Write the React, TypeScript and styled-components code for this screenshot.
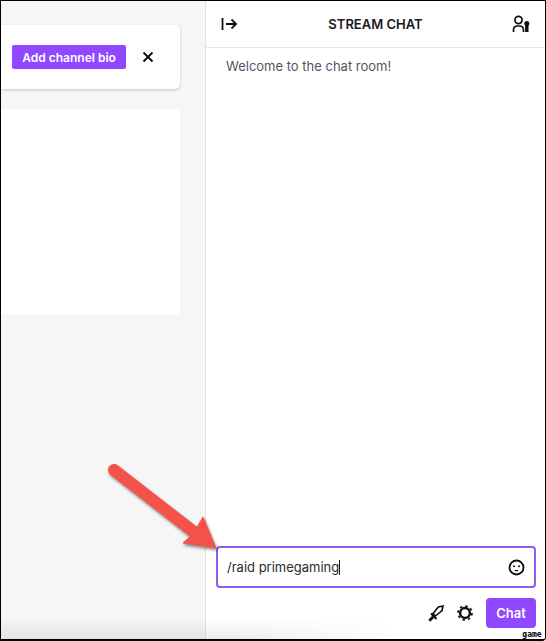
import React from "react";
import styled, { createGlobalStyle } from "styled-components";

const Global = createGlobalStyle`
  html, body {
    margin: 0;
    padding: 0;
    background: #fff;
  }
  body {
    font-family: Inter, "Liberation Sans", sans-serif;
  }
`;

const Frame = styled.div`
  position: relative;
  width: 546px;
  height: 641px;
  box-sizing: border-box;
  border: solid #000;
  border-width: 1px 1px 2px 1px;
  border-bottom-right-radius: 4px;
  display: flex;
  overflow: hidden;
  background: #fff;
`;

const Dashboard = styled.div`
  width: 205px;
  flex-shrink: 0;
  box-sizing: border-box;
  padding: 24px 25px 0 0;
  background: #f6f6f6;
  border-right: 1px solid #e2e2e4;
  display: flex;
  flex-direction: column;
  gap: 20px;
`;

const BioCard = styled.div`
  height: 64px;
  background: #fff;
  border-radius: 0 5px 5px 0;
  box-shadow: 0 1px 3px rgba(0, 0, 0, 0.2);
  display: flex;
  align-items: center;
  justify-content: flex-end;
  gap: 15px;
  padding-right: 25px;
`;

const BioButton = styled.button`
  width: 114px;
  height: 24px;
  border: 0;
  padding: 0;
  border-radius: 2px;
  background: #9147ff;
  color: #fff;
  font: 600 12px Inter, "Liberation Sans", sans-serif;
`;

const IconButton = styled.span`
  display: flex;
  color: #0e0e10;
`;

const Panel = styled.div`
  height: 205px;
  background: #fff;
`;

const Chat = styled.div`
  flex: 1;
  display: flex;
  flex-direction: column;
  background: #fff;
`;

const ChatHeader = styled.div`
  height: 47px;
  flex-shrink: 0;
  box-sizing: border-box;
  border-bottom: 1px solid #e6e6e8;
  display: flex;
  align-items: center;
  justify-content: space-between;
  padding: 0 15px 0 15px;
`;

const ChatTitle = styled.div`
  font-size: 13px;
  font-weight: 600;
  color: #18181b;
  margin-left: 1px;
`;

const Messages = styled.div`
  flex: 1;
  padding: 9px 20px;
  font-size: 13px;
  line-height: 18px;
  color: #53535f;
`;

const Composer = styled.div`
  padding: 0 9px 11px 10px;
  display: flex;
  flex-direction: column;
  gap: 10px;
`;

const InputBox = styled.div`
  height: 42px;
  box-sizing: border-box;
  border: 2px solid #8f5cf0;
  border-radius: 4px;
  display: flex;
  align-items: center;
  justify-content: space-between;
  padding: 0 9px 0 9px;
  font-size: 13px;
  color: #2a2a2e;
`;

const Caret = styled.span`
  display: inline-block;
  width: 1px;
  height: 15px;
  vertical-align: -3px;
  background: #18181b;
`;

const Actions = styled.div`
  display: flex;
  align-items: center;
  justify-content: flex-end;
  gap: 12px;
`;

const ChatButton = styled.button`
  width: 50px;
  height: 30px;
  border: 0;
  padding: 0;
  border-radius: 4px;
  background: #9147ff;
  color: #fff;
  font: 600 13px Inter, "Liberation Sans", sans-serif;
`;

const Arrow = styled.svg`
  position: absolute;
  left: 100px;
  top: 455px;
  filter: drop-shadow(1px 2px 1.5px rgba(0, 0, 0, 0.45));
`;

/* soft shadow along the bottom edge of the capture */
const BottomShade = styled.div`
  position: absolute;
  left: 0;
  bottom: 0;
  width: 400px;
  height: 22px;
  pointer-events: none;
  background: linear-gradient(to top, rgba(0, 0, 0, 0.07), transparent);
  mask-image: linear-gradient(to right, #000 60%, transparent);
`;

const Watermark = styled.div`
  position: absolute;
  right: 0;
  bottom: 0;
  width: 26px;
  height: 9px;
  background: #fff;
  color: #000;
  font: 700 8px/9px "DejaVu Sans Mono", monospace;
  text-align: center;
`;

export default function App() {
  return (
    <>
      <Global />
      <Frame>
        <Dashboard>
          <BioCard>
            <BioButton type="button">Add channel bio</BioButton>
            <IconButton>
              <svg width="14" height="14" viewBox="0 0 14 14" fill="none" stroke="currentColor" strokeWidth="1.8">
                <path d="M2.5 2.5l9 9M11.5 2.5l-9 9" />
              </svg>
            </IconButton>
          </BioCard>
          <Panel />
        </Dashboard>
        <Chat>
          <ChatHeader>
            <IconButton>
              <svg width="17" height="14" viewBox="0 0 17 14" fill="none" stroke="currentColor" strokeWidth="1.8">
                <path d="M1.5 1v12M5 7h10.5M10.5 2.5L15 7l-4.5 4.5" />
              </svg>
            </IconButton>
            <ChatTitle>STREAM CHAT</ChatTitle>
            <IconButton>
              <svg width="18" height="18" viewBox="0 0 18 18" fill="none" stroke="currentColor" strokeWidth="1.7">
                <circle cx="6.5" cy="5" r="3.6" />
                <path d="M1.5 17v-2c0-2.5 1.8-4 4-4h2c2.2 0 4 1.5 4 4v2" />
                <circle cx="14.8" cy="8.4" r="2.5" fill="currentColor" stroke="none" />
                <path d="M14.8 9v8" strokeWidth="3.4" />
              </svg>
            </IconButton>
          </ChatHeader>
          <Messages>Welcome to the chat room!</Messages>
          <Composer>
            <InputBox>
              <span>
                /raid primegaming
                <Caret />
              </span>
              <IconButton>
                <svg width="17" height="17" viewBox="0 0 17 17" fill="none" stroke="currentColor" strokeWidth="1.8">
                  <circle cx="8.5" cy="8.5" r="7" />
                  <circle cx="6" cy="7.2" r="1" fill="currentColor" stroke="none" />
                  <circle cx="11" cy="7.2" r="1" fill="currentColor" stroke="none" />
                  <path d="M7 11.2c1 .6 2 .6 3 0" strokeWidth="1.3" />
                </svg>
              </IconButton>
            </InputBox>
            <Actions>
              <IconButton>
                <svg width="16" height="17" viewBox="0 0 16 17" fill="none" stroke="currentColor">
                  <path d="M15 1l-4.6 1-5.4 6.5 2.5 2.5 6.5-5.4z" strokeWidth="1.6" />
                  <path d="M3 8.5l5.5 5.5" strokeWidth="2" />
                  <path d="M5.2 11.8L1.3 15.7" strokeWidth="2.8" />
                </svg>
              </IconButton>
              <IconButton>
                <svg width="18" height="18" viewBox="0 0 18 18" fill="none" stroke="currentColor">
                  <circle cx="9" cy="9" r="4.9" strokeWidth="2.5" />
                  <circle cx="9" cy="9" r="7" strokeWidth="1.6" strokeDasharray="2.5 3" />
                </svg>
              </IconButton>
              <ChatButton type="button">Chat</ChatButton>
            </Actions>
          </Composer>
        </Chat>
        <BottomShade />
        <Arrow width="120" height="100" viewBox="0 0 120 100">
          <path d="M13 14L93 76" fill="none" stroke="#f5534a" strokeWidth="12" strokeLinecap="round" />
          <path d="M115 92L82 87L92 78L102 61Z" fill="#f5534a" stroke="#f5534a" strokeWidth="1" strokeLinejoin="round" />
        </Arrow>
        <Watermark>game</Watermark>
      </Frame>
    </>
  );
}
